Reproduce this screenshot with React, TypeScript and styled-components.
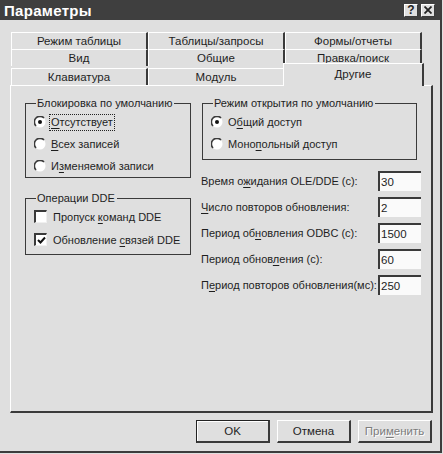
import React from "react";
import styled, { createGlobalStyle } from "styled-components";

const GlobalStyle = createGlobalStyle`
  html, body {
    margin: 0;
    padding: 0;
    background: #dfdfdf;
  }
  body {
    font-family: "Liberation Sans", Arial, sans-serif;
    font-size: 11px;
    color: #1e1e1e;
  }
`;

const tabRows = [
  ["Режим таблицы", "Таблицы/запросы", "Формы/отчеты"],
  ["Вид", "Общие", "Правка/поиск"],
  ["Клавиатура", "Модуль", "Другие"],
];

const fields = [
  { label: <>Время о<u>ж</u>идания OLE/DDE (с):</>, value: "30" },
  { label: <><u>Ч</u>исло повторов обновления:</>, value: "2" },
  { label: <>Период об<u>н</u>овления ODBC (с):</>, value: "1500" },
  { label: <>Период обнов<u>л</u>ения (с):</>, value: "60" },
  { label: <>П<u>е</u>риод повторов обновления(мс):</>, value: "250" },
];

const Radio: React.FC<{ checked?: boolean }> = ({ checked }) => (
  <svg width="12" height="12" viewBox="0 0 12 12">
    <circle cx="6" cy="6" r="5.5" fill="#fff" />
    <path d="M2 10 A5.6 5.6 0 0 1 10 2" stroke="#3a3a3a" strokeWidth="1.6" fill="none" />
    {checked && <circle cx="6" cy="6" r="2" fill="#111" />}
  </svg>
);

const App: React.FC = () => {
  return (
    <>
      <GlobalStyle />
      <Window>
        <TitleBar>
          <Title>Параметры</Title>
          <TitleButtons>
            <TitleButton>?</TitleButton>
            <TitleButton>
              <svg width="8" height="8" viewBox="0 0 8 8">
                <path d="M0.5 0.5 L7.5 7.5 M7.5 0.5 L0.5 7.5" stroke="#222" strokeWidth="1.8" />
              </svg>
            </TitleButton>
          </TitleButtons>
        </TitleBar>

        <Body>
          <TabStrip>
            {tabRows.map((row, r) => (
              <TabRow key={r} $last={r === 2}>
                {row.map((t) => (
                  <Tab key={t} $selected={t === "Другие"}>{t}</Tab>
                ))}
              </TabRow>
            ))}
          </TabStrip>

          <Panel>
            <Column>
              <Group>
                <Legend>Блокировка по умолчанию</Legend>
                <OptionList>
                  <Option>
                    <Radio checked />
                    <Focused><u>О</u>тсутствует</Focused>
                  </Option>
                  <Option>
                    <Radio />
                    <span><u>В</u>сех записей</span>
                  </Option>
                  <Option>
                    <Radio />
                    <span>И<u>з</u>меняемой записи</span>
                  </Option>
                </OptionList>
              </Group>

              <Group $spaced>
                <Legend>Операции DDE</Legend>
                <OptionList $check>
                  <Option $check>
                    <CheckBox />
                    <span>Пропуск <u>к</u>оманд DDE</span>
                  </Option>
                  <Option $check>
                    <CheckBox>
                      <svg width="9" height="9" viewBox="0 0 9 9">
                        <path d="M1 4 L3.5 6.5 L8 1.5" stroke="#111" strokeWidth="2" fill="none" />
                      </svg>
                    </CheckBox>
                    <span>Обновление <u>с</u>вязей DDE</span>
                  </Option>
                </OptionList>
              </Group>
            </Column>

            <Column>
              <Group $narrow>
                <Legend>Режим открытия по умолчанию</Legend>
                <OptionList $short>
                  <Option>
                    <Radio checked />
                    <span>О<u>б</u>щий доступ</span>
                  </Option>
                  <Option>
                    <Radio />
                    <span>Моно<u>п</u>ольный доступ</span>
                  </Option>
                </OptionList>
              </Group>

              <Fields>
                {fields.map((f) => (
                  <FieldRow key={f.value}>
                    <span>{f.label}</span>
                    <TextBox>{f.value}</TextBox>
                  </FieldRow>
                ))}
              </Fields>
            </Column>
          </Panel>

          <ButtonRow>
            <Button $default>OK</Button>
            <Button>Отмена</Button>
            <Button $disabled>При<u>м</u>енить</Button>
          </ButtonRow>
        </Body>
      </Window>
    </>
  );
};

export default App;

const Window = styled.div`
  width: 440px;
  height: 451px;
  background: #dfdfdf;
  border-right: 2px solid #3c3c3c;
  border-bottom: 2px solid #3c3c3c;
  display: flex;
  flex-direction: column;
`;

const TitleBar = styled.div`
  height: 20px;
  background: #3f3f3f;
  display: flex;
  align-items: center;
  justify-content: space-between;
  padding: 0 5px 0 4px;
`;

const Title = styled.span`
  color: #fff;
  font-weight: bold;
  font-size: 15px;
  letter-spacing: 0.3px;
`;

const TitleButtons = styled.div`
  display: flex;
  gap: 3px;
`;

const TitleButton = styled.div`
  width: 14px;
  height: 13px;
  box-sizing: border-box;
  background: #dfdfdf;
  border-top: 1px solid #fff;
  border-left: 1px solid #fff;
  border-right: 1px solid #3a3a3a;
  border-bottom: 1px solid #3a3a3a;
  display: flex;
  align-items: center;
  justify-content: center;
  font-weight: bold;
  font-size: 12px;
  line-height: 1;
  color: #222;
`;

const Body = styled.div`
  flex: 1;
  display: flex;
  flex-direction: column;
  padding: 12px 7px 0 10px;
`;

const TabStrip = styled.div`
  display: flex;
  flex-direction: column;
  margin-left: 1px;
`;

const TabRow = styled.div<{ $last?: boolean }>`
  display: flex;
  height: ${(p) => (p.$last ? 19 : 17)}px;
  align-items: flex-end;
`;

const Tab = styled.div<{ $selected?: boolean }>`
  box-sizing: border-box;
  width: ${(p) => (p.$selected ? 141 : 137)}px;
  height: ${(p) => (p.$selected ? 23 : 17)}px;
  margin: ${(p) => (p.$selected ? "0 -2px -1px -2px" : "0")};
  position: relative;
  z-index: ${(p) => (p.$selected ? 1 : 0)};
  background: #dfdfdf;
  border-top: 1px solid #fff;
  border-left: 1px solid #fff;
  border-right: 2px solid #3a3a3a;
  display: flex;
  justify-content: center;
  align-items: ${(p) => (p.$selected ? "flex-start" : "center")};
  padding-top: ${(p) => (p.$selected ? 3 : 0)}px;
  line-height: 14px;
  font-size: 11.5px;
  white-space: nowrap;
`;

const Panel = styled.div`
  box-sizing: border-box;
  width: 423px;
  height: 328px;
  border-top: 1px solid #fff;
  border-left: 1px solid #fff;
  border-right: 2px solid #3a3a3a;
  border-bottom: 2px solid #3a3a3a;
  display: grid;
  grid-template-columns: 166px 220px;
  column-gap: 10px;
  align-items: start;
  padding: 10px 0 0 14px;
`;

const Column = styled.div`
  display: flex;
  flex-direction: column;
`;

const Group = styled.fieldset<{ $spaced?: boolean; $narrow?: boolean }>`
  margin: ${(p) => (p.$spaced ? "13px 0 0" : p.$narrow ? "0 4px 0 1px" : "0")};
  padding: 0 6px 0 8px;
  min-width: 0;
  border: 1px solid #3a3a3a;
`;

const Legend = styled.legend`
  padding: 0 2px 0 1px;
  margin-left: 2px;
  line-height: 14px;
  white-space: nowrap;
`;

const OptionList = styled.div<{ $check?: boolean; $short?: boolean }>`
  display: flex;
  flex-direction: column;
  padding: ${(p) => (p.$check ? "0 0 3px" : p.$short ? "1px 0 4px" : "1px 0 0")};
`;

const Option = styled.div<{ $check?: boolean }>`
  height: ${(p) => (p.$check ? 23 : 22)}px;
  display: flex;
  align-items: center;
  gap: ${(p) => (p.$check ? 6 : 5)}px;
  white-space: nowrap;

  u {
    text-decoration-thickness: 1px;
    text-underline-offset: 2px;
  }
`;

const Focused = styled.span`
  outline: 1px dotted #222;
  outline-offset: 0;
  padding: 0 1px;
  margin-left: -1px;
  line-height: 15px;
`;

const CheckBox = styled.div`
  width: 13px;
  height: 13px;
  box-sizing: border-box;
  background: #fff;
  border-top: 2px solid #3a3a3a;
  border-left: 2px solid #3a3a3a;
  border-right: 1px solid #f0f0f0;
  border-bottom: 1px solid #f0f0f0;
  display: flex;
  align-items: center;
  justify-content: center;
`;

const Fields = styled.div`
  display: flex;
  flex-direction: column;
  gap: 6px;
  margin-top: 11px;
`;

const FieldRow = styled.div`
  height: 20px;
  display: flex;
  align-items: center;
  justify-content: space-between;
  white-space: nowrap;

  u {
    text-underline-offset: 2px;
  }
`;

const TextBox = styled.div`
  box-sizing: border-box;
  width: 43px;
  height: 20px;
  background: #fafafa;
  border-top: 2px solid #3a3a3a;
  border-left: 2px solid #3a3a3a;
  padding: 1px 0 0 1px;
  line-height: 16px;
  font-size: 11.5px;
`;

const ButtonRow = styled.div`
  display: flex;
  justify-content: flex-end;
  gap: 7px;
  margin-top: 7px;
  width: 422px;
`;

const Button = styled.div<{ $default?: boolean; $disabled?: boolean }>`
  box-sizing: border-box;
  width: 74px;
  height: 23px;
  background: #dfdfdf;
  border-top: 1px solid ${(p) => (p.$default ? "#222" : "#fff")};
  border-left: 1px solid ${(p) => (p.$default ? "#222" : "#fff")};
  border-right: 2px solid #3a3a3a;
  border-bottom: 2px solid #3a3a3a;
  box-shadow: ${(p) => (p.$default ? "inset 1px 1px #fff" : "none")};
  display: flex;
  align-items: center;
  justify-content: center;
  font-size: 11.5px;
  color: ${(p) => (p.$disabled ? "#7c7c7c" : "#1e1e1e")};
  text-shadow: ${(p) => (p.$disabled ? "1px 1px #fff" : "none")};

  u {
    text-underline-offset: 2px;
  }
`;
